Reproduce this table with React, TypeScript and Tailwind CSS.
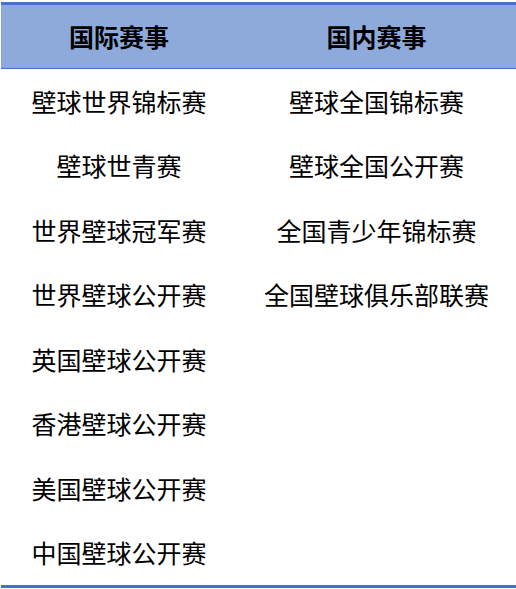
const intl = [
  "壁球世界锦标赛",
  "壁球世青赛",
  "世界壁球冠军赛",
  "世界壁球公开赛",
  "英国壁球公开赛",
  "香港壁球公开赛",
  "美国壁球公开赛",
  "中国壁球公开赛",
]

const domestic = ["壁球全国锦标赛", "壁球全国公开赛", "全国青少年锦标赛", "全国壁球俱乐部联赛"]

export default function App() {
  const rows = intl.map((name, i) => [name, domestic[i] ?? ""])

  return (
    <div className="w-[516px] h-[589px] bg-white pt-[2px] pl-[1px] font-['Noto_Sans_CJK_SC','Noto_Sans',sans-serif] text-black">
      <div className="w-[515px] border-t-[3px] border-b-[3px] border-[#4472c4]">
        <div className="flex h-[64px] bg-[#8eaadb] border-b-[1.5px] border-[#4472c4] text-[25px] font-bold">
          <div className="w-[236px] flex items-center justify-center">国际赛事</div>
          <div className="flex-1 flex items-center justify-center">国内赛事</div>
        </div>
        {rows.map(([a, b], i) => (
          <div key={i} className="flex h-[64.5px] text-[25px]">
            <div className="w-[236px] flex items-center justify-center">{a}</div>
            <div className="flex-1 flex items-center justify-center">{b}</div>
          </div>
        ))}
      </div>
    </div>
  )
}
